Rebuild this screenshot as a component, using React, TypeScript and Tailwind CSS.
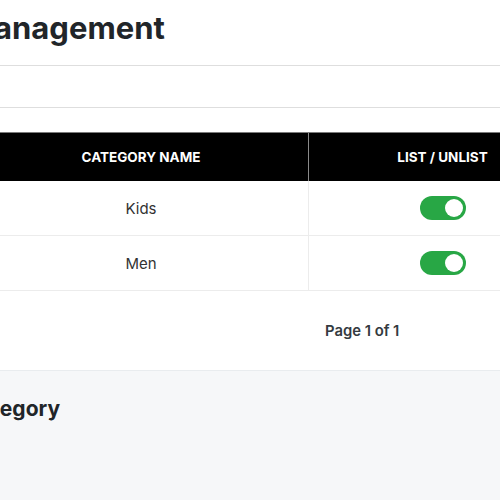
import React from "react";

function Toggle() {
  return (
    <div className="w-[46px] h-[24px] rounded-full bg-[#28a745] flex items-center justify-end pr-[3px]">
      <div className="w-[18px] h-[18px] rounded-full bg-white" />
    </div>
  );
}

const rows = ["Kids", "Men"];

export default function App() {
  return (
    <div className="w-[500px] h-[500px] overflow-hidden bg-white font-['Inter',sans-serif] text-[#212529]">
      <div className="h-[371px] flex flex-col border-b border-[#e9ecef]">
        <div className="pt-[8px] -ml-[183px] whitespace-nowrap">
          <h1 className="text-[31px] leading-[40px] font-bold text-[#212529]">Category Management</h1>
        </div>
        <div className="mt-[17px] h-[43px] border-y border-[#dedede] bg-white" />
        <div className="mt-[24px] -ml-[26px] w-[602px]">
          <div className="flex h-[49px] bg-black border-t border-[#7a7a7a] text-white text-[13.5px] font-bold uppercase">
            <div className="w-[334px] flex items-center justify-center">Category Name</div>
            <div className="w-px bg-[#8a8a8a]" />
            <div className="flex-1 flex items-center justify-center">List / Unlist</div>
          </div>
          {rows.map((r) => (
            <div key={r} className="flex h-[55px] border-b border-[#ececec] text-[15px] text-[#333]">
              <div className="w-[334px] flex items-center justify-center pt-[2px]">{r}</div>
              <div className="w-px bg-[#ececec]" />
              <div className="flex-1 flex items-center justify-center">
                <Toggle />
              </div>
            </div>
          ))}
        </div>
        <div className="flex-1 flex items-center pl-[325px] pt-[2px] text-[14.8px] font-semibold text-[#343a40]">
          Page 1 of 1
        </div>
      </div>
      <div className="h-[129px] bg-[#f6f7f9] pt-[24px]">
        <div className="-ml-[82px] whitespace-nowrap">
          <h2 className="text-[21px] leading-[28px] font-bold text-[#212529]">Add Category</h2>
        </div>
      </div>
    </div>
  );
}
